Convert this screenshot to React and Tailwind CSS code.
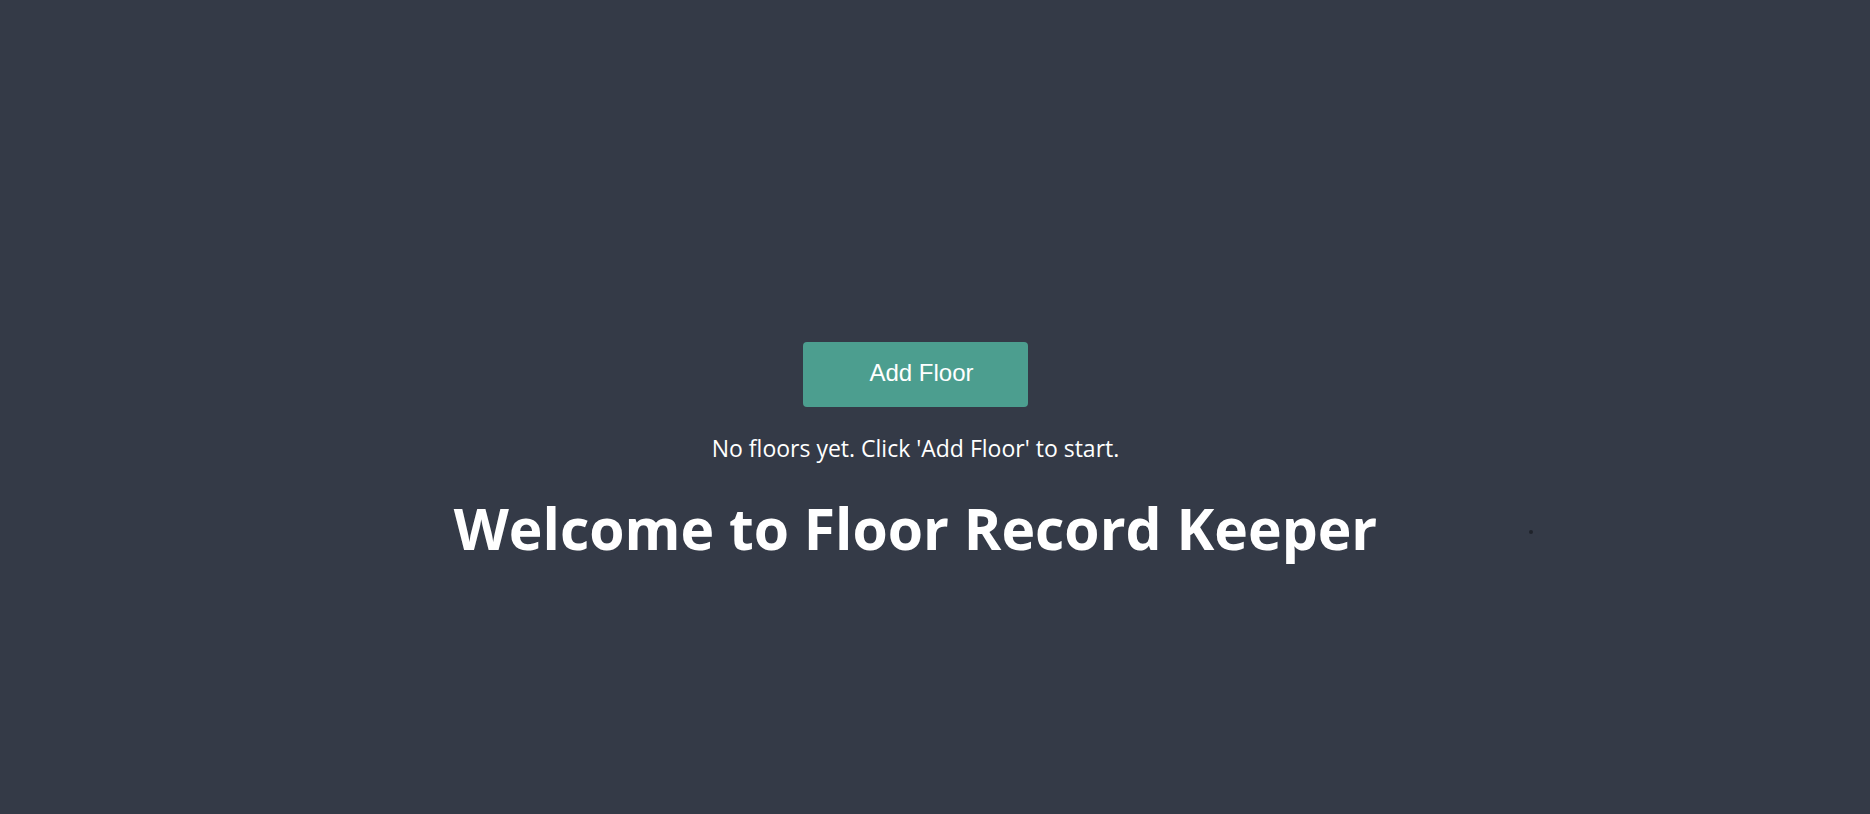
export default function App() {
  return (
    <div className="relative min-h-[814px] w-full bg-[#343a47] overflow-hidden" style={{ fontFamily: '"Open Sans", "Noto Sans", sans-serif' }}>
      <div className="flex flex-col items-center pt-[342px] pr-[39px]">
        <button className="w-[225px] h-[65px] pb-[3px] pl-[12px] rounded-[4px] bg-[#4c9e8f] text-white text-[24px]" style={{ fontFamily: '"Liberation Sans", Arial, sans-serif' }}>
          Add Floor
        </button>
        <p className="mt-[25px] text-white text-[23px] leading-[32px]">No floors yet. Click 'Add Floor' to start.</p>
        <h1 className="mt-[28px] text-white font-bold text-[57px] leading-[72px]">Welcome to Floor Record Keeper</h1>
      </div>
      <div className="absolute left-[1529px] top-[530px] w-[4px] h-[4px] rounded-full bg-[#1f232b]" />
    </div>
  );
}
